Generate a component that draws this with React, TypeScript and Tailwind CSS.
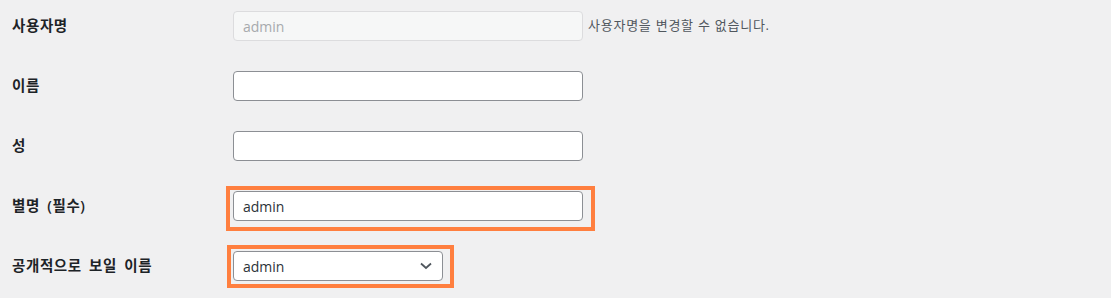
const rows = [
	{ label: "사용자명", kind: "disabled", value: "admin" },
	{ label: "이름", kind: "text", value: "" },
	{ label: "성", kind: "text", value: "" },
	{ label: "별명 (필수)", kind: "nickname", value: "admin" },
	{ label: "공개적으로 보일 이름", kind: "select", value: "admin" },
];

export default function App() {
	return (
		<div
			className="w-full h-[298px] bg-[#f0f0f1] text-[#1d2327] pl-[12px] pt-[11px] overflow-hidden"
			style={{ fontFamily: '"Open Sans", "Noto Sans CJK KR", sans-serif' }}
		>
			<div className="flex flex-col gap-[30px]">
				{rows.map((row) => (
					<div key={row.label} className="flex items-center h-[30px]">
						<div className="w-[221px] text-[14.5px] font-semibold tracking-[0.6px] [word-spacing:3px]">
							{row.label}
						</div>
						<Field kind={row.kind} value={row.value} />
					</div>
				))}
			</div>
		</div>
	);
}

function Field({ kind, value }: { kind: string; value: string }) {
	if (kind === "disabled") {
		return (
			<div className="flex items-center gap-[5px]">
				<div className="w-[350px] h-[30px] rounded-[4px] border border-[#dcdcde] bg-[#f6f7f7] px-[9px] flex items-center text-[14px] text-[#a7aaad]">
					{value}
				</div>
				<span className="text-[13px] text-[#50575e] tracking-[0.75px]">사용자명을 변경할 수 없습니다.</span>
			</div>
		);
	}

	if (kind === "select") {
		return (
			<div className="relative">
				<div className="w-[210px] h-[30px] rounded-[4px] border border-[#8c8f94] bg-white pl-[9px] pr-[10px] flex items-center justify-between text-[14px] text-[#2c3338]">
					<span>{value}</span>
					<svg width="12" height="8" viewBox="0 0 12 8" fill="none">
						<path d="M1 1.5l5 4.5 5-4.5" stroke="#50575e" strokeWidth="1.8" />
					</svg>
				</div>
				{/* highlight */}
				<div className="absolute -left-[6px] -top-[6px] -right-[11px] -bottom-[7px] border-4 border-[#ff7f3f] pointer-events-none" />
			</div>
		);
	}

	return (
		<div className="relative">
			<div className="w-[350px] h-[30px] rounded-[4px] border border-[#8c8f94] bg-white px-[9px] flex items-center text-[14px] text-[#2c3338]">
				{value}
			</div>
			{kind === "nickname" && (
				<div className="absolute -left-[7px] -top-[5px] -right-[12px] -bottom-[10px] border-4 border-[#ff7f3f] pointer-events-none" />
			)}
		</div>
	);
}
